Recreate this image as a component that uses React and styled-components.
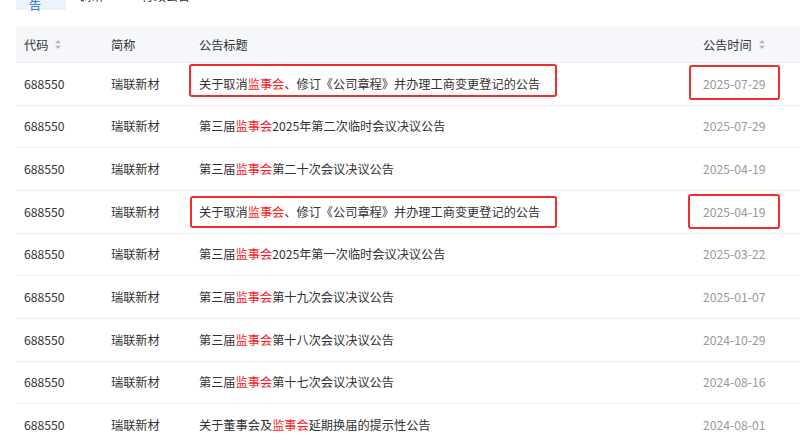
import React from "react";
import styled, { createGlobalStyle } from "styled-components";

const Global = createGlobalStyle`
  html, body { margin: 0; padding: 0; background: #fff; }
  body {
    font-family: "Microsoft YaHei", "Noto Sans CJK SC", "Noto Sans", sans-serif;
    font-size: 12.2px;
    color: #333;
    overflow: hidden;
  }
`;

const Page = styled.div`
  padding-left: 16px;
  width: 800px;
  box-sizing: border-box;
`;

const TabBar = styled.div`
  display: flex;
  margin-top: -20px;
  height: 30px;
`;

const Tab = styled.div`
  display: flex;
  align-items: center;
  justify-content: center;
  padding: 2px 13px 0;
  box-sizing: border-box;
  height: 30px;
  color: ${(p) => (p.$active ? "#1a6fe6" : "#333")};
  background: ${(p) => (p.$active ? "#edf3fc" : "transparent")};
  margin-right: ${(p) => (p.$active ? "0" : "12px")};
  width: ${(p) => (p.$active ? "50px" : "auto")};
`;

const Table = styled.div`
  margin-top: 17px;
  width: 784px;
`;

const cols = "87px 88px 504px 105px";

const HeadRow = styled.div`
  display: grid;
  grid-template-columns: ${cols};
  height: 36px;
  box-sizing: border-box;
  background: #f5f7fa;
  border-bottom: 1px solid #ebeef5;
  align-items: center;
`;

const HeadCell = styled.div`
  padding-left: 8px;
  display: flex;
  align-items: center;
  gap: 6px;
  color: #333;
`;

const Row = styled.div`
  position: relative;
  display: grid;
  grid-template-columns: ${cols};
  height: 42.67px;
  box-sizing: border-box;
  border-bottom: 1px solid #ebeef5;
  align-items: center;
`;

const Cell = styled.div`
  padding-left: 8px;
  white-space: nowrap;
  color: ${(p) => (p.$muted ? "#999" : "#333")};
`;

const Hl = styled.span`
  color: #ff1a1a;
`;

const Mark = styled.div`
  position: absolute;
  border: 2.5px solid #f22b2b;
  border-radius: 3px;
  box-sizing: border-box;
  pointer-events: none;
`;

const SortIcon = () => (
  <svg width="8" height="11" viewBox="0 0 8 11">
    <path d="M4 1 L7 4.2 L1 4.2 Z" fill="#b5b8bd" />
    <path d="M4 10 L7 6.8 L1 6.8 Z" fill="#b5b8bd" />
  </svg>
);

const rows = [
  { t: ["关于取消", "监事会", "、修订《公司章程》并办理工商变更登记的公告"], d: "2025-07-29", marks: [{ l: 189, t: 1, w: 368, h: 33 }, { l: 689, t: 2, w: 91, h: 35 }] },
  { t: ["第三届", "监事会", "2025年第二次临时会议决议公告"], d: "2025-07-29" },
  { t: ["第三届", "监事会", "第二十次会议决议公告"], d: "2025-04-19" },
  { t: ["关于取消", "监事会", "、修订《公司章程》并办理工商变更登记的公告"], d: "2025-04-19", marks: [{ l: 190, t: 5, w: 367, h: 32 }, { l: 688, t: 3, w: 92, h: 35 }] },
  { t: ["第三届", "监事会", "2025年第一次临时会议决议公告"], d: "2025-03-22" },
  { t: ["第三届", "监事会", "第十九次会议决议公告"], d: "2025-01-07" },
  { t: ["第三届", "监事会", "第十八次会议决议公告"], d: "2024-10-29" },
  { t: ["第三届", "监事会", "第十七次会议决议公告"], d: "2024-08-16" },
  { t: ["关于董事会及", "监事会", "延期换届的提示性公告"], d: "2024-08-01" },
];

export default function App() {
  return (
    <Page>
      <Global />
      <TabBar>
        <Tab $active>公告</Tab>
        <Tab>调研</Tab>
        <Tab>行政公告</Tab>
      </TabBar>
      <Table>
        <HeadRow>
          <HeadCell>代码<SortIcon /></HeadCell>
          <HeadCell>简称</HeadCell>
          <HeadCell>公告标题</HeadCell>
          <HeadCell>公告时间<SortIcon /></HeadCell>
        </HeadRow>
        {rows.map((r, i) => (
          <Row key={i}>
            <Cell>688550</Cell>
            <Cell>瑞联新材</Cell>
            <Cell>
              {r.t[0]}
              <Hl>{r.t[1]}</Hl>
              {r.t[2]}
            </Cell>
            <Cell $muted>{r.d}</Cell>
            {r.marks &&
              r.marks.map((m, j) => (
                <Mark key={j} style={{ left: m.l - 16, top: m.t, width: m.w, height: m.h }} />
              ))}
          </Row>
        ))}
      </Table>
    </Page>
  );
}
